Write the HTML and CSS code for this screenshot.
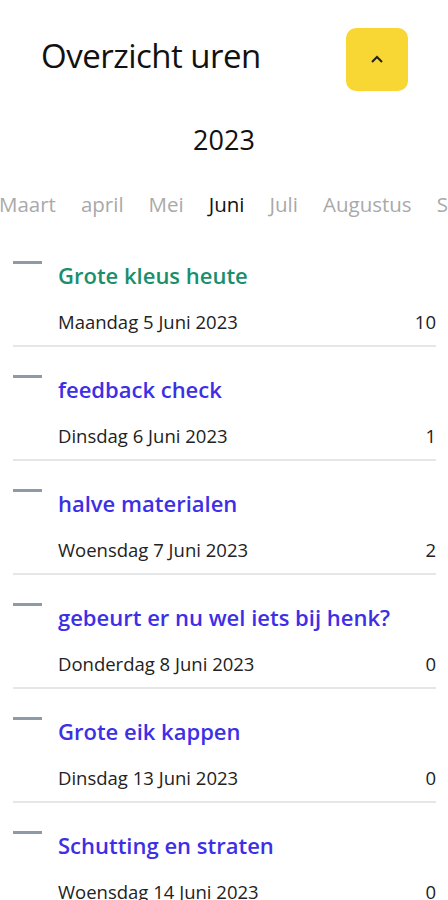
FILE: index.html
```html
<!DOCTYPE html>
<html lang="nl">
<head>
  <meta charset="UTF-8" />
  <meta name="viewport" content="width=device-width, initial-scale=1.0" />
  <title>Overzicht uren</title>
  <link rel="stylesheet" href="styles.css">
</head>
<body>
  <div class="top">
    <h1>Overzicht uren</h1>
    <button class="toggle" aria-label="Inklappen">
      <svg width="14" height="9" viewBox="0 0 14 9"><polyline points="2,7 7,2 12,7" fill="none" stroke="#222" stroke-width="2"/></svg>
    </button>
  </div>

  <div class="year">2023</div>

  <div class="months">
    <div class="months-inner">
      <span>Maart</span>
      <span>april</span>
      <span>Mei</span>
      <span class="active">Juni</span>
      <span>Juli</span>
      <span>Augustus</span>
      <span>September</span>
    </div>
  </div>

  <div class="list">
    <div class="item">
      <div class="dash"></div>
      <h4 class="done">Grote kleus heute</h4>
      <div class="row"><span>Maandag 5 Juni 2023</span><span>10</span></div>
    </div>
    <div class="item">
      <div class="dash"></div>
      <h4>feedback check</h4>
      <div class="row"><span>Dinsdag 6 Juni 2023</span><span>1</span></div>
    </div>
    <div class="item">
      <div class="dash"></div>
      <h4>halve materialen</h4>
      <div class="row"><span>Woensdag 7 Juni 2023</span><span>2</span></div>
    </div>
    <div class="item">
      <div class="dash"></div>
      <h4>gebeurt er nu wel iets bij henk?</h4>
      <div class="row"><span>Donderdag 8 Juni 2023</span><span>0</span></div>
    </div>
    <div class="item">
      <div class="dash"></div>
      <h4>Grote eik kappen</h4>
      <div class="row"><span>Dinsdag 13 Juni 2023</span><span>0</span></div>
    </div>
    <div class="item">
      <div class="dash"></div>
      <h4>Schutting en straten</h4>
      <div class="row"><span>Woensdag 14 Juni 2023</span><span>0</span></div>
    </div>
  </div>
</body>
</html>
```

FILE: styles.css
```css
* {
  margin: 0;
  padding: 0;
  box-sizing: border-box;
}
body {
  font-family: 'Open Sans', sans-serif;
  background: #fff;
  color: #111;
  overflow: hidden;
}
.top {
  display: flex;
  justify-content: space-between;
  align-items: center;
  padding: 28px 40px 0 41px;
}
.top h1 {
  font-size: 33px;
  font-weight: 400;
  letter-spacing: -0.5px;
  margin-bottom: 8px;
}
.toggle {
  width: 62px;
  height: 63px;
  border: none;
  border-radius: 10px;
  background: #f8d735;
  display: flex;
  align-items: center;
  justify-content: center;
}
.year {
  text-align: center;
  font-size: 27px;
  margin-top: 30px;
}
.months {
  overflow: hidden;
  margin-top: 32px;
}
.months-inner {
  display: flex;
  gap: 25px;
  margin-left: -1px;
  white-space: nowrap;
  font-size: 20.5px;
  line-height: 28px;
  color: #a9a9a9;
}
.months .active {
  color: #111;
}
.list {
  padding: 43px 12px 0 13px;
}
.item {
  border-bottom: 2px solid #e6e6e6;
  padding-bottom: 11px;
  margin-bottom: 28px;
}
.dash {
  width: 29px;
  height: 3px;
  background: #8e9aa6;
}
.item h4 {
  margin: -2px 0 0 45px;
  font-size: 22px;
  line-height: 26px;
  font-weight: 600;
  color: #3d2fe6;
}
.item h4.done {
  color: #1a8f6e;
}
.row {
  display: flex;
  justify-content: space-between;
  margin: 22px 0 0 45px;
  font-size: 18.5px;
  line-height: 24px;
  color: #222;
}
```
